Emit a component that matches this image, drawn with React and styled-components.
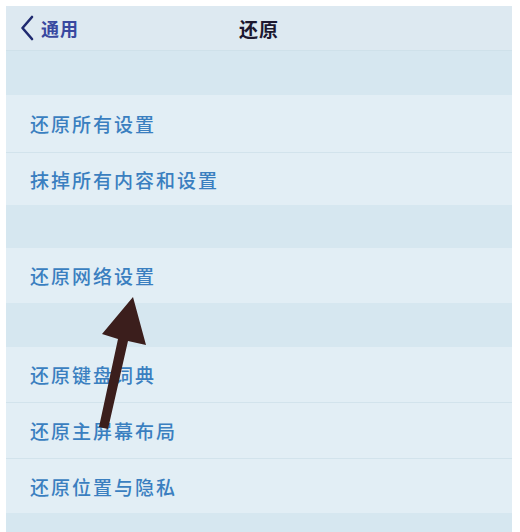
import React from "react";
import { styled, createGlobalStyle } from "styled-components";

const GlobalStyle = createGlobalStyle`
  body {
    margin: 0;
    background: #ffffff;
    font-family: "Noto Sans CJK SC", "Noto Sans", sans-serif;
  }
`;

const Page = styled.div`
  position: relative;
  width: 520px;
  height: 532px;
  padding: 6px 8px 0 6px;
  box-sizing: border-box;
  overflow: hidden;
`;

const Screen = styled.div`
  display: flex;
  flex-direction: column;
  height: 100%;
  overflow: hidden;
  background: #d7e8f0;
`;

const NavBar = styled.div`
  display: grid;
  grid-template-columns: 1fr auto 1fr;
  align-items: center;
  flex-shrink: 0;
  height: 45px;
  padding: 0 14px;
  background: #dde9f1;
  border-bottom: 1px solid #cfe1ea;
  box-sizing: border-box;
`;

const Back = styled.div`
  display: flex;
  align-items: center;
  gap: 7px;
  color: #3848a0;
  font-size: 18px;
  font-weight: 700;
  letter-spacing: 1px;
`;

const Title = styled.div`
  color: #1c1830;
  font-size: 19px;
  font-weight: 700;
  letter-spacing: 1px;
`;

const Gap = styled.div`
  height: ${(p) => p.h}px;
  background: #d6e7f0;
  flex-shrink: 0;
`;

const Group = styled.div`
  display: flex;
  flex-direction: column;
  flex-shrink: 0;
  background: #e2eef5;
`;

const Row = styled.div`
  display: flex;
  align-items: center;
  height: ${(p) => p.h}px;
  padding-left: 24px;
  color: #3a7fc0;
  font-size: 19px;
  font-weight: 500;
  letter-spacing: 2px;
  border-top: ${(p) => (p.first ? "none" : "1px solid #d2e3ec")};
  box-sizing: border-box;
`;

const Arrow = styled.svg`
  position: absolute;
  left: 0;
  top: 0;
  pointer-events: none;
`;

const groups = [
  { gap: 44, rows: [["还原所有设置", 57], ["抹掉所有内容和设置", 53]] },
  { gap: 43, rows: [["还原网络设置", 55]] },
  { gap: 44, rows: [["还原键盘词典", 55], ["还原主屏幕布局", 56], ["还原位置与隐私", 55]] },
];

export default function App() {
  return (
    <>
      <GlobalStyle />
      <Page>
        <Screen>
          <NavBar>
            <Back>
              <svg width="14" height="26" viewBox="0 0 14 26">
                <path d="M12 2 L2.5 13 L12 24" fill="none" stroke="#1f2a70" strokeWidth="2.6" strokeLinecap="round" strokeLinejoin="round" />
              </svg>
              通用
            </Back>
            <Title>还原</Title>
            <div />
          </NavBar>
          {groups.map((g, i) => (
            <React.Fragment key={i}>
              <Gap h={g.gap} />
              <Group>
                {g.rows.map(([label, h], j) => (
                  <Row key={label} h={h} first={j === 0}>
                    {label}
                  </Row>
                ))}
              </Group>
            </React.Fragment>
          ))}
          <Gap h={40} />
        </Screen>
        <Arrow width="520" height="532" viewBox="0 0 520 532">
          <polygon
            points="133,297 146,345 128,341 108,429 99,427 118,339 102,334"
            fill="#3b1e1c"
          />
        </Arrow>
      </Page>
    </>
  );
}
